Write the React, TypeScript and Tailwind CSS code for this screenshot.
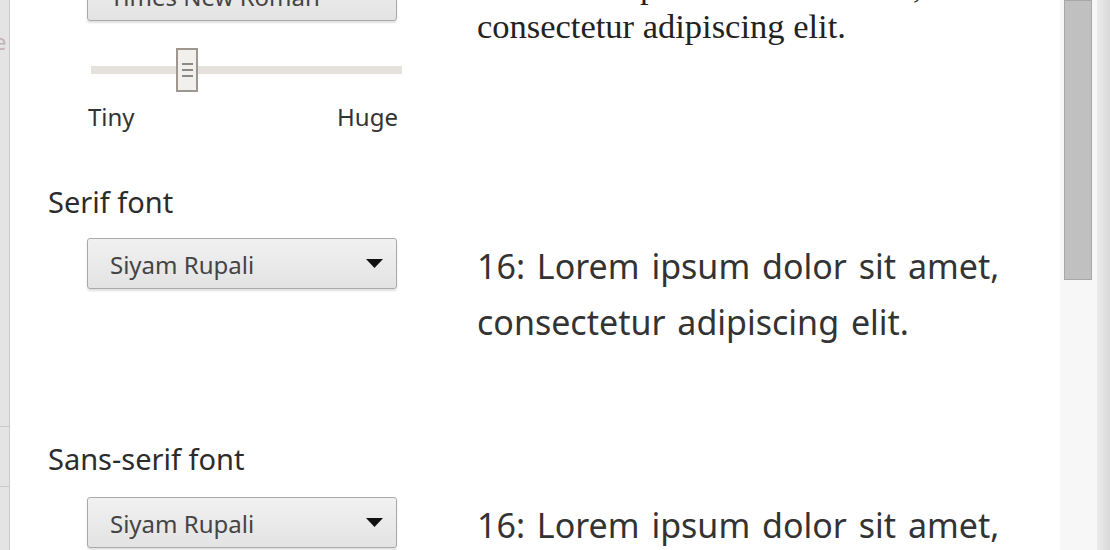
import React from 'react';

const FontSelect = ({ value }: { value: string }) => (
  <div className="ml-[39px] flex h-[51px] w-[310px] items-center justify-between rounded-[3px] border border-[#aaaaaa] bg-gradient-to-b from-[#f1f1f1] to-[#e3e3e3] pl-[22px] pr-[13px] pt-[3px] shadow-[0_2px_2px_rgba(0,0,0,0.12)]">
    <span className="font-['Noto_Sans',sans-serif] text-[24px] leading-none text-[#444444]">{value}</span>
    <svg width="17" height="9" viewBox="0 0 17 9" className="-mt-[3px]">
      <path d="M0 0h17L8.5 9z" fill="#111111" />
    </svg>
  </div>
);

const SizeSlider = () => (
  <div className="ml-[43px] mt-[27px] w-[311px]">
    <div className="relative flex h-[44px] items-center">
      <div className="h-[8px] w-full bg-[#e5e1dc]" />
      <div className="absolute left-[85px] top-0 flex h-[44px] w-[22px] flex-col items-center justify-center gap-[4px] border-2 border-[#9d978f] bg-[#f2f0ed]">
        <span className="h-[2px] w-[11px] bg-[#8e8982]" />
        <span className="h-[2px] w-[11px] bg-[#8e8982]" />
        <span className="h-[2px] w-[11px] bg-[#8e8982]" />
      </div>
    </div>
    <div className="-ml-[3px] mt-[9px] flex w-[310px] justify-between font-['Noto_Sans',sans-serif] text-[24px] leading-[32px] text-[#333333]">
      <span>Tiny</span>
      <span>Huge</span>
    </div>
  </div>
);

const SectionLabel = ({ children, className }: { children: React.ReactNode; className: string }) => (
  <div className={`font-['Noto_Sans',sans-serif] text-[29px] leading-[40px] text-[#2c2c2c] ${className}`}>{children}</div>
);

const Preview = ({ serif }: { serif?: boolean }) =>
  serif ? (
    <div className="-mt-[3px] ml-[75px] font-['Liberation_Serif','Times_New_Roman',serif] text-[34.5px] leading-[1.15] text-[#222222]">
      16: Lorem ipsum dolor sit amet,
      <br />
      consectetur adipiscing elit.
    </div>
  ) : (
    <div className="ml-[80px] font-['Noto_Sans',sans-serif] text-[34px] leading-[56px] text-[#333333] [word-spacing:3px]">
      16: Lorem ipsum dolor sit amet,
      <br />
      consectetur adipiscing elit.
    </div>
  );

export default function App() {
  return (
    <div className="flex h-[550px] w-[1110px] overflow-hidden bg-white">
      <div className="flex w-[10px] shrink-0 flex-col overflow-hidden border-r border-[#cbcbcb] bg-[#e4e4e4]">
        <span className="-ml-[6px] mt-[28px] font-['Noto_Sans',sans-serif] text-[22px] leading-[26px] text-[#c2b4b4]">e</span>
        <div className="mt-[372px] h-px w-full bg-[#c9c9c9]" />
        <div className="mt-[59px] h-px w-full bg-[#c9c9c9]" />
      </div>

      <div className="flex-1 overflow-hidden pl-[38px]">
        <div className="-mt-[30px] flex items-start">
          <div>
            <FontSelect value="Times New Roman" />
            <SizeSlider />
          </div>
          <Preview serif />
        </div>

        <SectionLabel className="mt-[49px]">Serif font</SectionLabel>
        <div className="mt-[16px] flex items-start">
          <FontSelect value="Siyam Rupali" />
          <Preview />
        </div>

        <SectionLabel className="mt-[89px]">Sans-serif font</SectionLabel>
        <div className="mt-[18px] flex items-start">
          <FontSelect value="Siyam Rupali" />
          <Preview />
        </div>
      </div>

      <div className="w-[37px] shrink-0 bg-[#f7f7f7] pl-[4px]">
        <div className="h-[280px] w-[28px] border border-[#a8a8a8] bg-[#c0c0c0]" />
      </div>
      <div className="w-[13px] shrink-0 bg-gradient-to-r from-[#ebebeb] to-[#d9d9d9]" />
    </div>
  );
}
